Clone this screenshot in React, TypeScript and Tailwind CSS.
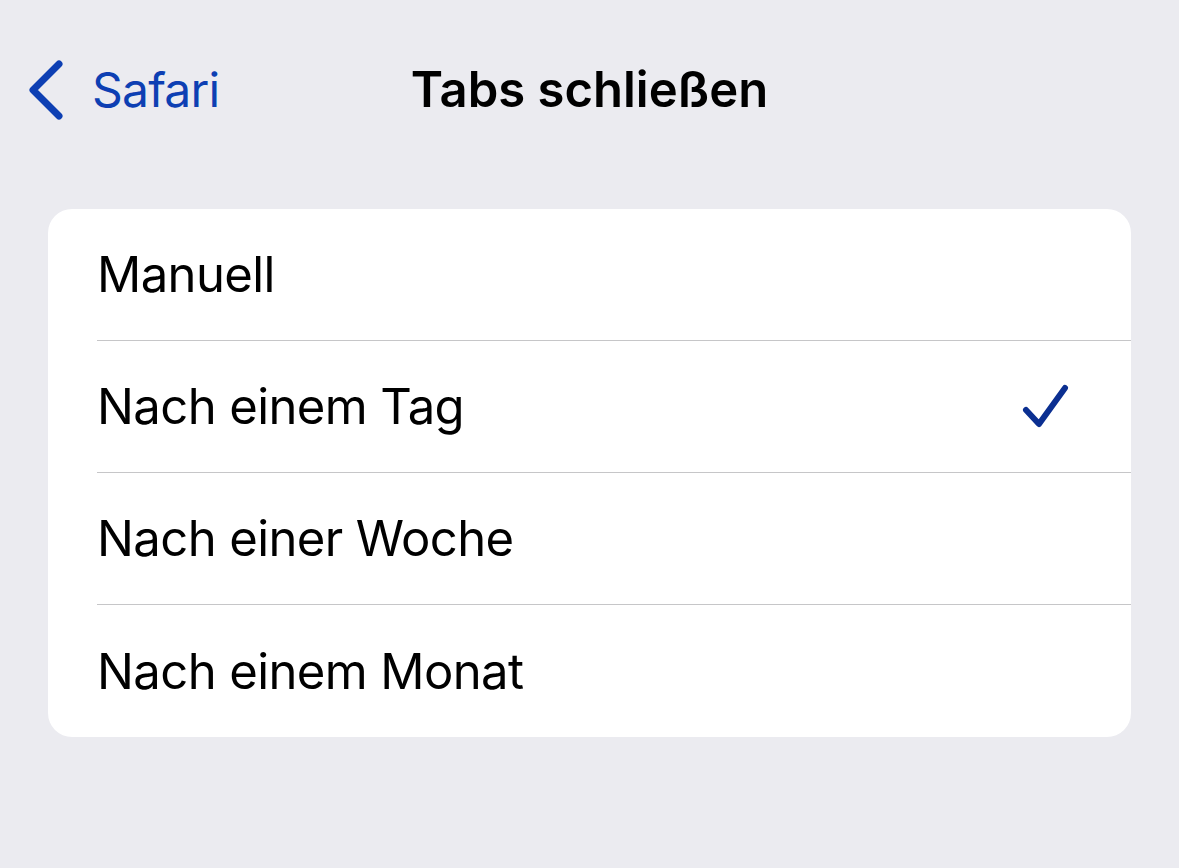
export default function App() {
  const options = ["Manuell", "Nach einem Tag", "Nach einer Woche", "Nach einem Monat"];
  const selected = 1;

  return (
    <div
      className="w-[1179px] h-[868px] bg-[#ebebf0] overflow-hidden"
      style={{ fontFamily: 'Inter, "Liberation Sans", sans-serif' }}
    >
      {/* Nav bar */}
      <div className="relative h-[182px]">
        <div className="absolute left-[28px] top-[60px] flex items-center gap-[28px] text-[#0d3fb3]">
          <svg width="36" height="60" viewBox="0 0 36 60" fill="none">
            <path d="M31 4 L5 30 L31 56" stroke="currentColor" strokeWidth="7" strokeLinecap="round" strokeLinejoin="round" />
          </svg>
          <span className="text-[48px] leading-none tracking-[-0.8px]">Safari</span>
        </div>
        <div className="absolute left-0 right-0 top-[65px] text-center text-[49px] font-semibold leading-none tracking-[0px] text-black">
          Tabs schließen
        </div>
      </div>

      {/* Options card */}
      <div className="mx-[48px] mt-[27px] bg-white rounded-[24px] overflow-hidden">
        {options.map((o, i) => (
          <div key={o} className="pl-[97px] -ml-[48px]">
            <div className={`h-[132px] flex items-center justify-between pr-[60px] ${i < options.length - 1 ? "border-b border-[#c6c6c8]" : ""}`}>
              <span className="text-[49px] leading-none tracking-[-0.6px] text-black">{o}</span>
              {i === selected && (
                <svg width="50" height="48" viewBox="0 0 50 48" fill="none">
                  <path d="M5 27 L18 41 L44 5" stroke="#0b2f91" strokeWidth="6" strokeLinecap="round" strokeLinejoin="round" />
                </svg>
              )}
            </div>
          </div>
        ))}
      </div>
    </div>
  );
}
